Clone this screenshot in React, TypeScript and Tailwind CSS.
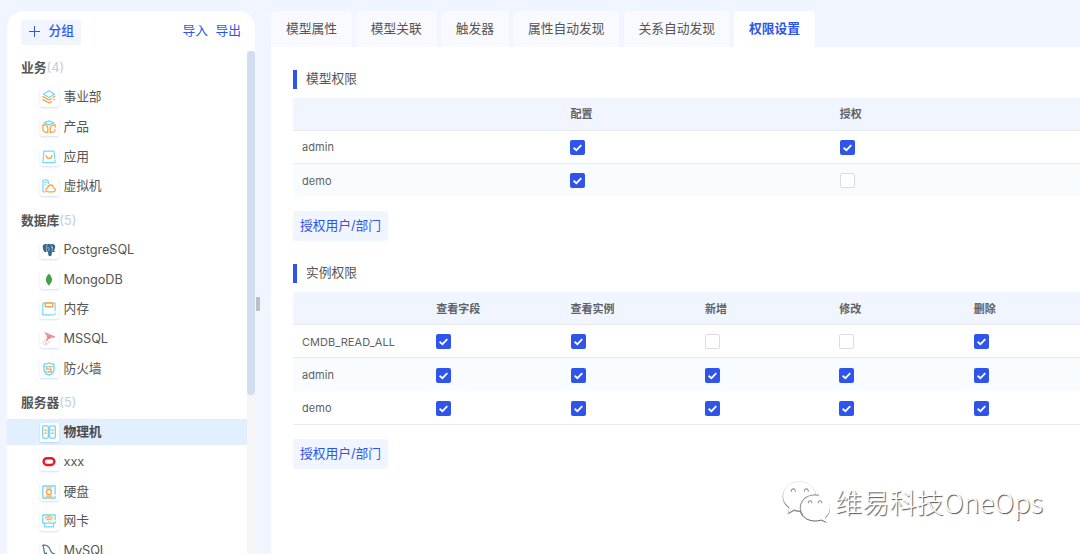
import type { ReactNode } from "react";

const CYAN = "#6ed9f8";
const ORANGE = "#faa346";

const line = { fill: "none", strokeWidth: 1.2, strokeLinejoin: "round", strokeLinecap: "round" } as const;

function Glyph({ children }: { children: ReactNode }) {
  return (
    <svg viewBox="0 0 14 14" className="size-[14px]" {...line}>
      {children}
    </svg>
  );
}

const icons: Record<string, ReactNode> = {
  layers: (
    <Glyph>
      <path stroke={CYAN} d="M7 .8 12.6 4.2 7 7.6 1.4 4.2Z" />
      <path stroke={ORANGE} strokeWidth="1.4" d="M1 6.6 7 10 9 8.8M11.4 7.4 12.8 6.6M1 9.6 7 13 9.4 11.6M11.6 9.6H12.6" />
    </Glyph>
  ),
  product: (
    <Glyph>
      <path stroke={CYAN} d="M7 .9 12 2.9 7 4.9 2 2.9Z" />
      <path stroke={ORANGE} strokeWidth="1.3" d="M.9 4.6 3.4 5.2Q5.8 6 5.8 8V12.6L2.4 11.8Q.9 11.2.9 9.8ZM13.1 7.2V4.6L10.2 5.4Q8.2 6 8.2 8V12.6L11.6 11.8Q13.1 11.3 13.1 9.8" />
    </Glyph>
  ),
  app: (
    <Glyph>
      <path stroke={CYAN} d="M13 10V12.6H.9L1.9 1.2H12L12.7 8.4" />
      <path stroke={ORANGE} strokeWidth="1.3" d="M4.2 5.6Q4.6 8.4 7 8.4 9.4 8.4 9.8 5.6" />
    </Glyph>
  ),
  vm: (
    <Glyph>
      <path stroke={CYAN} d="M3 12.8H1V1H4.8L6.4 2.6V4.6M3 3.6H4.4M3 6H4" />
      <path stroke={ORANGE} strokeWidth="1.3" d="M5.8 12.9Q3.8 12.6 3.8 10.8 4 9 5.6 8.8 6.2 6 8.8 6 11.2 6.1 11.5 8.8 13.3 9.2 13.3 10.9 13.2 12.7 11.5 12.9Z" />
    </Glyph>
  ),
  postgres: (
    <Glyph>
      <path
        fill="#336791"
        d="M3.6.9C1.6.9.5 2.2.8 4.4 1.1 6.6 2 9 3.1 9.2 3.9 9.3 4.4 8.5 5 8.3 5.9 8.6 6.1 9.4 6.2 10.8 6.4 12.6 7 13.4 8.1 13.2 9.4 12.9 9.8 11.8 9.8 10.4L10 8.9C11 9.2 12.5 9 13.2 8.2L11.9 7.8C12.9 6.2 13.5 3.9 13.1 2.7 12.3.9 10.3.7 8.8 1.2 7.3.8 6.3.8 5.3 1.2 4.8 1 4.2.9 3.6.9Z"
      />
      <path stroke="#dde8f0" strokeWidth=".6" d="M5.2 1.6C4.3 3 4.2 5.4 4.5 7.6M5.6 4.7Q6.8 4 7.1 5.2 7.2 6.6 6.5 7.9M8.9 1.7C10.5 3 10.9 4.6 10 8.2M9.2 4.6H10.3" />
    </Glyph>
  ),
  mongo: (
    <Glyph>
      <path fill="#43a047" d="M7 .8C3.2 4.4 2.7 8.4 6.5 12L7 13.2 7.4 12C11.2 8.4 10.8 4.4 7 .8Z" />
    </Glyph>
  ),
  memory: (
    <Glyph>
      <path stroke={CYAN} d="M13.1 8.5V1H.8V12.9H11.4M13.1 12.6V11.4" />
      <path stroke={ORANGE} strokeWidth="1.4" d="M3.2 1H10.8V4Q10.8 4.8 10 4.8H4Q3.2 4.8 3.2 4Z" />
    </Glyph>
  ),
  mssql: (
    <Glyph>
      <path fill="#f6caca" d="M3 .8 6 1.6 9.4 4 12.8 4.9 8.3 5.8 4.5 8.2 5.4 4.5Z" />
      <path stroke="#e07876" strokeWidth=".8" d="M3 .9C6 2 9 3.7 12.9 4.9 9.5 5.1 6.6 6.4 4 8.6 6 6 5.6 3 3 .9ZM5.3 4.3 9.6 4.2M6 2 6.8 6.4M8.8 3 7.6 5.9" />
      <path stroke="#d0d0d0" strokeWidth=".7" d="M3.8 8.3C.9 9 .3 11 1.4 12 3 13.6 6.3 12.8 7.4 9.7M2 9.8 5.4 12M5.2 8.6 2.9 12.8M5.2 8.6 7.4 9.7" />
    </Glyph>
  ),
  firewall: (
    <Glyph>
      <path stroke={CYAN} strokeWidth="1.4" d="M2 2.2Q5 2 7 .8 9 2 12 2.2V7.4Q11.8 11.1 7 13.2 2.2 11.1 2 7.4Z" />
      <path stroke={CYAN} strokeWidth=".9" d="M2.4 4.7H11.6M2.4 9.9H11" />
      <path stroke={ORANGE} d="M4.6 7.2H9.4M7.2 4.7H9M8.9 7.2V9.6M4.8 4.9V6.8M6.2 9.8H8.4" />
    </Glyph>
  ),
  server: (
    <Glyph>
      <rect stroke={CYAN} strokeWidth="1.3" x=".7" y=".9" width="5.6" height="12.2" rx="1" />
      <rect stroke={CYAN} strokeWidth="1.3" x="7.7" y=".9" width="5.6" height="12.2" rx="1" />
      <path stroke={ORANGE} strokeWidth="1.3" d="M2.8 5.2H4.3M2.8 8.2H4.3M9.7 5.2H11.2M9.7 8.2H11.2" />
    </Glyph>
  ),
  oracle: (
    <Glyph>
      <rect stroke="#ea1b22" strokeWidth="2.4" x="1.6" y="3.2" width="10.8" height="6.8" rx="3.4" />
    </Glyph>
  ),
  disk: (
    <Glyph>
      <path stroke={CYAN} strokeWidth="1.3" d="M13.1 9V1H.9V13H13.1V11.2" />
      <circle stroke={ORANGE} strokeWidth="1.3" cx="7" cy="7" r="2.5" />
      <path stroke={ORANGE} strokeWidth="1.2" d="M4.4 3H9.6M4.2 11.2H9.8" />
    </Glyph>
  ),
  nic: (
    <Glyph>
      <path stroke={CYAN} strokeWidth="1.3" d="M13.2 5.5V1H.8V9.2H13.2V8M2.5 9.4V12.9H11.5V9.4" />
      <path stroke={ORANGE} strokeWidth="1.2" d="M3.4 4.2Q7 1 10.6 4.2M5 5.8Q7 4 9 5.8M7 7.2V7.5" />
    </Glyph>
  ),
  mysql: (
    <Glyph>
      <path stroke="#3f6f8d" d="M.9 1.2C4.6.6 7.6 3 8.5 6.6 9 8.5 9.8 9.4 12.8 10.2L11.2 10.9 13.2 13M.9 1.2C1.2 3.4 2.2 4.4 2.1 6.4 2 8 2.6 9.4 3.6 10.7L4.2 8.9 6 12.8" />
    </Glyph>
  ),
};

const groups = [
  {
    name: "业务",
    count: 4,
    items: [
      ["事业部", "layers"],
      ["产品", "product"],
      ["应用", "app"],
      ["虚拟机", "vm"],
    ],
  },
  {
    name: "数据库",
    count: 5,
    items: [
      ["PostgreSQL", "postgres"],
      ["MongoDB", "mongo"],
      ["内存", "memory"],
      ["MSSQL", "mssql"],
      ["防火墙", "firewall"],
    ],
  },
  {
    name: "服务器",
    count: 5,
    items: [
      ["物理机", "server"],
      ["xxx", "oracle"],
      ["硬盘", "disk"],
      ["网卡", "nic"],
      ["MySQL", "mysql"],
    ],
  },
];

const tabs = ["模型属性", "模型关联", "触发器", "属性自动发现", "关系自动发现", "权限设置"];

function Sidebar() {
  return (
    <aside className="flex h-full w-[248px] shrink-0 flex-col overflow-hidden rounded-t-[17px] bg-white">
      <div className="flex h-[40px] shrink-0 items-start justify-between pt-[9px] pr-[14px] pl-[14px] text-[#2f54eb]">
        <button className="flex h-[24px] w-[60px] items-center gap-[8.5px] rounded-[2px] bg-[#f0f5ff] pb-[2px] pl-[8px] leading-none shadow-[0_1px_1px_rgba(0,0,0,0.04)]">
          <svg viewBox="0 0 11 11" className="size-[11px]" stroke="currentColor" strokeWidth="1">
            <path d="M5.5 0V11M0 5.5H11" />
          </svg>
          <span className="font-medium">分组</span>
        </button>
        <div className="flex h-[22px] items-center gap-[7.5px]">
          <span>导入</span>
          <span>导出</span>
        </div>
      </div>
      <div className="flex min-h-0 flex-1">
        <nav className="w-[240px] shrink-0 overflow-hidden pt-[2px]">
          {groups.map((g) => (
            <section key={g.name} className="mb-[4.3px]">
              <h3 className="flex h-[29.67px] items-center pt-px pl-[14px] font-bold text-[#555]">
                {g.name}
                <span className="font-normal text-[#c3cdd7]">({g.count})</span>
              </h3>
              {g.items.map(([label, icon]) => {
                const active = label === "物理机";
                return (
                  <div key={label} className="flex h-[29.67px] items-center">
                    <div
                      className={
                        active
                          ? "flex h-[26px] w-full items-center bg-[#e1efff] pl-[33px] font-bold text-[#4a4a4a]"
                          : "flex h-[26px] w-full items-center pl-[33px] text-[#555]"
                      }
                    >
                      <span className="mr-[5px] flex size-[18.5px] items-center justify-center rounded-[2px] bg-white shadow-[0_1px_2px_rgba(47,84,235,0.2)]">
                        {icons[icon]}
                      </span>
                      <span className="tracking-[-0.08px]">{label}</span>
                    </div>
                  </div>
                );
              })}
            </section>
          ))}
        </nav>
        <div className="w-[8px] bg-[#f5f5f5]">
          <div className="h-[344px] rounded-full bg-[#d2dcf3]" />
        </div>
      </div>
    </aside>
  );
}

function Check({ on }: { on: boolean }) {
  return on ? (
    <span className="flex size-[15px] items-center justify-center rounded-[2px] bg-[#2f54eb]">
      <svg viewBox="0 0 15 15" className="size-[15px]" fill="none" stroke="#fff" strokeWidth="1.8">
        <path d="M3.6 7.8 6.4 10.2 11.3 5.2" />
      </svg>
    </span>
  ) : (
    <span className="block size-[15px] rounded-[2px] border border-[#dcdcdc] bg-white" />
  );
}

type Row = { name: string; values: boolean[] };

function Permissions({ title, heads, rows, wide }: { title: string; heads: string[]; rows: Row[]; wide?: boolean }) {
  const first = wide ? "w-[268.7px] shrink-0 pl-[9px]" : "w-[134.4px] shrink-0 pl-[9px]";
  const cell = wide ? "w-[269.2px] shrink-0 pl-[8.8px]" : "w-[134.4px] shrink-0 pl-[8.8px]";
  return (
    <section className="overflow-hidden">
      <h2 className="flex h-[20px] items-center gap-[9px]">
        <span className="h-[19px] w-[4px] bg-[#2f54eb]" />
        {title}
      </h2>
      <div className="mt-[9px] text-[11px]">
        <div className="flex h-[32.5px] items-center border-b border-[#e8eaec] bg-[#f0f5ff] pt-px font-bold text-[#606266]">
          <div className={first} />
          {heads.map((h) => (
            <div key={h} className={cell}>
              {h}
            </div>
          ))}
        </div>
        {rows.map((r, i) => (
          <div
            key={r.name}
            className={
              i % 2
                ? "flex h-[33.3px] items-center bg-[#f8fcff] pt-px text-[#606266]"
                : "flex h-[33.3px] items-center border-b border-[#e8eaec] pt-px text-[#606266]"
            }
          >
            <div className={first}>
              <span className="tracking-[0.05px]">{r.name}</span>
            </div>
            {r.values.map((v, k) => (
              <div key={k} className={cell}>
                <Check on={v} />
              </div>
            ))}
          </div>
        ))}
      </div>
      <button className="mt-[14px] flex h-[30px] w-[95px] items-center justify-center rounded-[2px] bg-[#f0f5ff] text-[#2f54eb]">
        授权用户/部门
      </button>
    </section>
  );
}

function Watermark() {
  return (
    <div className="absolute top-[479px] left-[782px] flex items-start">
      <svg viewBox="0 0 50 46" className="h-[46px] w-[50px] [filter:drop-shadow(0.8px_1px_0.5px_rgba(0,0,0,0.6))]">
        <path
          fill="#fff"
          stroke="#dedede"
          strokeWidth=".6"
          d="M17.5 2.5C8.2 2.5 1 9 1 17 1 21.6 3.4 25.4 7.3 28.1L6.2 33.8 12 30.6C15.2 31.6 18 31.6 20.8 31.2L34 16C33.2 8.4 26.4 2.5 17.5 2.5Z"
        />
        <path
          fill="#fff"
          d="M33 16C24.7 16 18.3 21.6 18.3 28.8S24.7 41.6 33 41.6C35.2 41.6 37.4 41.3 39.3 40.5L44.4 43 43.2 38.4C46.2 36 48 32.6 48 28.8 48 21.6 41.3 16 33 16Z"
        />
        <g fill="none" stroke="#969696" strokeWidth="1.1">
          <path d="M20.8 36.2C15.4 28.5 19 17.5 31 16Q34 15.6 37 16.3" />
          <path d="M9.5 12.7A2 2 0 1 1 13.1 12.7M22.5 12.7A2 2 0 1 1 26.1 12.7M26.6 24.2A1.7 1.7 0 1 1 29.6 24.2M36.6 24.2A1.7 1.7 0 1 1 39.6 24.2" />
        </g>
      </svg>
      <span className="mt-[2px] ml-[3px] font-['Noto_Sans_CJK_SC',sans-serif] text-[27.2px] leading-[40px] font-light whitespace-nowrap text-white [text-shadow:1px_1px_1px_rgba(0,0,0,0.7)]">
        维易科技OneOps
      </span>
    </div>
  );
}

export default function App() {
  return (
    <div className="relative flex h-[554px] w-[1080px] overflow-hidden bg-[#f0f5ff] pt-[11px] pl-[7px] font-['Inter','Noto_Sans_CJK_SC',sans-serif] text-[12.75px] leading-[18px] text-[#555]">
      <Sidebar />
      <div className="flex w-[16px] shrink-0 items-start pt-[286px] pl-px">
        <div className="h-[14px] w-[4px] bg-[#bfbfbf]" />
      </div>
      <main className="flex min-w-0 flex-1 flex-col">
        <div className="flex h-[36px] shrink-0 gap-[4.2px]">
          {tabs.map((t) => (
            <div
              key={t}
              className={
                t === "权限设置"
                  ? "flex items-center rounded-t-[4px] bg-white px-[14.9px] font-bold text-[#2f54eb]"
                  : "flex items-center rounded-t-[4px] bg-[#f9faff] px-[14.9px]"
              }
            >
              {t}
            </div>
          ))}
        </div>
        <div className="flex flex-1 flex-col gap-[22.3px] bg-white pt-[22px] pl-[22px]">
          <Permissions
            wide
            title="模型权限"
            heads={["配置", "授权"]}
            rows={[
              { name: "admin", values: [true, true] },
              { name: "demo", values: [true, false] },
            ]}
          />
          <Permissions
            title="实例权限"
            heads={["查看字段", "查看实例", "新增", "修改", "删除"]}
            rows={[
              { name: "CMDB_READ_ALL", values: [true, true, false, false, true] },
              { name: "admin", values: [true, true, true, true, true] },
              { name: "demo", values: [true, true, true, true, true] },
            ]}
          />
        </div>
      </main>
      <Watermark />
    </div>
  );
}
